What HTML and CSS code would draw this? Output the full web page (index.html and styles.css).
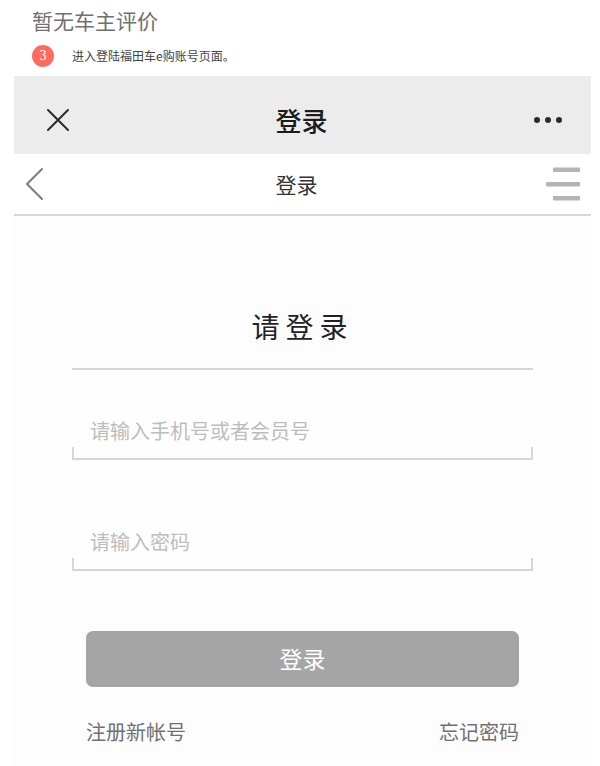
FILE: index.html
```html
<!DOCTYPE html>
<html lang="zh-CN">
<head>
  <meta charset="utf-8">
  <meta name="viewport" content="width=device-width, initial-scale=1">
  <title>登录</title>
  <link rel="stylesheet" href="styles.css">
</head>
<body>
  <section class="guide">
    <p class="guide-note">暂无车主评价</p>
    <div class="step">
      <span class="step-number">3</span>
      <p class="step-text">进入登陆福田车e购账号页面。</p>
    </div>
  </section>

  <main class="phone">
    <header class="app-bar">
      <button class="icon-button" type="button" aria-label="关闭">
        <svg width="24" height="24" viewBox="0 0 24 24" fill="none" stroke="#2b2b2b" stroke-width="2" stroke-linecap="round">
          <path d="M2 2L22 22M22 2L2 22"/>
        </svg>
      </button>
      <h1 class="app-title">登录</h1>
      <button class="icon-button" type="button" aria-label="更多">
        <svg width="30" height="8" viewBox="0 0 30 8" fill="#2b2b2b">
          <circle cx="4" cy="4" r="3"/>
          <circle cx="15" cy="4" r="3"/>
          <circle cx="26" cy="4" r="3"/>
        </svg>
      </button>
    </header>

    <nav class="page-bar">
      <button class="icon-button" type="button" aria-label="返回">
        <svg width="22" height="34" viewBox="0 0 22 34" fill="none" stroke="#7d7d7d" stroke-width="2" stroke-linecap="round" stroke-linejoin="round">
          <path d="M17 2L2 17L17 32"/>
        </svg>
      </button>
      <h2 class="page-title">登录</h2>
      <button class="icon-button" type="button" aria-label="菜单">
        <svg width="34" height="34" viewBox="0 0 34 34" fill="#b4b4b4">
          <rect x="7" y="0.5" width="27" height="4.5" rx="1"/>
          <rect x="0" y="15" width="34" height="4.5" rx="1"/>
          <rect x="7" y="29" width="27" height="4.5" rx="1"/>
        </svg>
      </button>
    </nav>

    <form class="login">
      <h3 class="login-title">请登录</h3>
      <input class="field" type="text" placeholder="请输入手机号或者会员号" aria-label="手机号或者会员号">
      <input class="field" type="password" placeholder="请输入密码" aria-label="密码">
      <div class="actions">
        <button class="submit" type="submit">登录</button>
        <div class="links">
          <a href="#">注册新帐号</a>
          <a href="#">忘记密码</a>
        </div>
      </div>
    </form>
  </main>
</body>
</html>
```
FILE: styles.css
```css
* {
  box-sizing: border-box;
}

body {
  display: flex;
  flex-direction: column;
  min-height: 100vh;
  margin: 0;
  padding: 0 9px 0 14px;
  background: #fff;
  color: #333;
  font-family: "Noto Sans CJK SC", sans-serif;
}

h1,
h2,
h3,
p {
  margin: 0;
  font-weight: 400;
}

.guide {
  display: flex;
  flex-direction: column;
  gap: 10px;
  padding: 5px 18px 9px;
}

.guide-note {
  color: #707070;
  font-size: 21px;
  line-height: 30px;
}

.step {
  display: flex;
  align-items: center;
  gap: 18px;
}

.step-number {
  width: 22px;
  height: 22px;
  border-radius: 50%;
  background: #ff6b5c;
  color: #fff;
  font-family: "Liberation Serif", serif;
  font-size: 14px;
  line-height: 22px;
  text-align: center;
}

.step-text {
  color: #444;
  font-size: 12px;
  line-height: 22px;
}

.phone {
  flex: 1;
  background: #fdfdfd;
}

.icon-button {
  display: flex;
  padding: 0;
  border: 0;
  background: none;
}

.app-bar,
.page-bar {
  display: flex;
  align-items: center;
  justify-content: space-between;
}

.app-bar {
  height: 78px;
  padding: 10px 28px 0 32px;
  background: #ececec;
}

.app-title {
  color: #1c1c1c;
  font-size: 26px;
  font-weight: 500;
  line-height: 40px;
}

.page-bar {
  height: 62px;
  padding: 0 11px;
  border-bottom: 2px solid #d6d6d6;
  background: #fff;
}

.page-title {
  font-size: 21px;
  line-height: 30px;
}

.login {
  display: flex;
  flex-direction: column;
  padding: 90px 58px 19px;
}

.login-title {
  margin-bottom: 34px;
  padding-bottom: 22px;
  border-bottom: 2px solid #d6d6d6;
  color: #222;
  font-size: 28px;
  line-height: 40px;
  letter-spacing: 6px;
  text-align: center;
}

/* Underline with a short upright at each end */
.field {
  width: 100%;
  height: 56px;
  padding: 0 18px 3px;
  border: 0;
  border-radius: 0;
  outline: 0;
  background:
    linear-gradient(#d6d6d6, #d6d6d6) left bottom / 100% 2px no-repeat,
    linear-gradient(#d6d6d6, #d6d6d6) left bottom / 2px 13px no-repeat,
    linear-gradient(#d6d6d6, #d6d6d6) right bottom / 2px 13px no-repeat,
    #fefefe;
  color: #333;
  font-family: inherit;
  font-size: 20px;
}

.field + .field {
  margin-top: 55px;
}

.field::placeholder {
  color: #bdbdbd;
}

.actions {
  display: flex;
  flex-direction: column;
  gap: 30px;
  padding: 60px 14px 0;
}

.submit {
  height: 56px;
  padding: 0 0 2px;
  border: 0;
  border-radius: 7px;
  background: #a5a5a5;
  color: #fff;
  font-family: inherit;
  font-size: 23px;
}

.links {
  display: flex;
  justify-content: space-between;
  font-size: 20px;
  line-height: 30px;
}

.links a {
  color: #707070;
  text-decoration: none;
}
```
